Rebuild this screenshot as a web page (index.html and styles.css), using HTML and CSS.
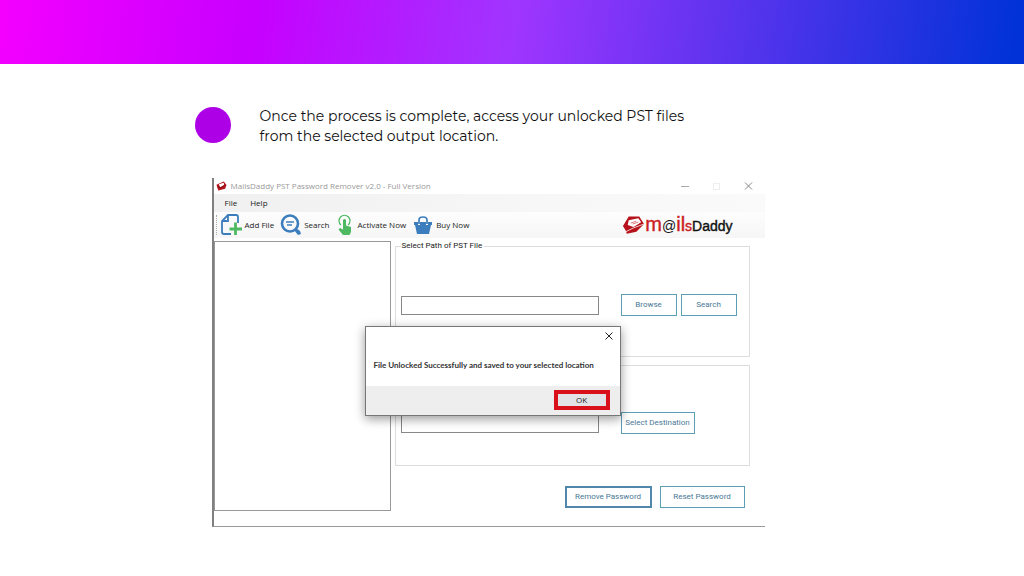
FILE: index.html
```html
<!doctype html>
<html lang="en">
<head>
  <meta charset="UTF-8">
  <meta name="viewport" content="width=device-width, initial-scale=1">
  <title>MailsDaddy PST Password Remover</title>
  <link rel="stylesheet" href="styles.css">
</head>
<body>
<header class="banner"></header>

<main class="slide">
  <div class="step">
    <span class="dot"></span>
    <p class="step-text">Once the process is complete, access your unlocked PST files from the selected output location.</p>
  </div>

  <div class="window">
    <div class="titlebar">
      <svg class="app-icon" viewBox="0 0 24 22">
        <path d="M1 8L17 1L23 9L20 17L5 21L3 15Z" fill="#b5121b"/>
        <path d="M6 7L17 4L18 9L9 14Z" fill="#fff"/>
        <path d="M3 13L11 15L20 8" fill="none" stroke="#7d0c12" stroke-width="2"/>
      </svg>
      <span class="title">MailsDaddy PST Password Remover v2.0 - Full Version</span>
      <svg class="win-btns" viewBox="0 0 74 10">
        <path d="M1 5.500H9" stroke="#aaa"/>
        <rect x="33.500" y="2.500" width="6" height="6" fill="none" stroke="#eee"/>
        <path d="M65 1.500L72 8.500M72 1.500L65 8.500" stroke="#888"/>
      </svg>
    </div>

    <nav class="menubar">
      <a href="#">File</a>
      <a href="#">Help</a>
    </nav>

    <div class="toolbar">
      <button class="tool">
        <svg class="icon" viewBox="0 0 22 22">
          <path d="M17 9V3Q17 1 15 1H7L1 7V18Q1 20 3 20H10M7 1V7H1" fill="none" stroke="#3b7dbd" stroke-width="1.800"/>
          <path d="M14.500 8.500V21M8.500 15H21" stroke="#4fb962" stroke-width="2.800"/>
        </svg>
        Add File
      </button>
      <button class="tool">
        <svg class="icon" viewBox="0 0 22 22">
          <circle cx="10" cy="9.500" r="8" fill="none" stroke="#3b7dbd" stroke-width="2.600"/>
          <path d="M6 8H14M7 11H12" stroke="#3b7dbd" stroke-width="1.400"/>
          <path d="M14 16L18 21L21 20L20 17L16 14Z" fill="#3b7dbd"/>
        </svg>
        Search
      </button>
      <button class="tool tool-hand">
        <svg class="icon icon-hand" viewBox="0 0 16 22">
          <path d="M4 11A5.500 5.500 0 1 1 11 11" fill="none" stroke="#4fb962" stroke-width="1.200"/>
          <path d="M6 6Q7.500 4 9 6V11.500L14 13V18L12.500 21H6L1.500 15.500L3 14L6 15.500Z" fill="#4fb962"/>
        </svg>
        Activate Now
      </button>
      <button class="tool tool-buy">
        <svg class="icon icon-buy" viewBox="0 0 18 20">
          <path d="M5 9V5Q5 2 9 2T13 5V9" fill="none" stroke="#3b7dbd" stroke-width="1.700"/>
          <path d="M0 7H4V10H6V7H12V10H14V7H18V10H17L15 19H3L1 10H0Z" fill="#3b7dbd"/>
        </svg>
        Buy Now
      </button>
      <div class="brand">
        <svg class="brand-icon" viewBox="0 0 24 20">
          <path d="M7 1L18 1L23 9L15 17L5 19L4 16L1 11Z" fill="#b5121b"/>
          <path d="M7 5L17 3L20 7L12 12L6 10Z" fill="#fff"/>
          <path d="M9 8L15 6M11 9L17 7" stroke="#d8787c"/>
          <path d="M4 17L12 13L23 9" fill="none" stroke="#f3d5d6"/>
        </svg>
        <span class="brand-name"><span class="brand-m">m</span><span class="brand-at">@</span><span class="brand-il">il</span><span class="brand-s">s</span>Daddy</span>
      </div>
    </div>

    <div class="content">
      <div class="tree"></div>
      <div class="forms">
        <fieldset class="group">
          <legend>Select Path of PST File</legend>
          <div class="field-row">
            <input class="path" type="text" aria-label="PST file path">
            <button class="btn">Browse</button>
            <button class="btn">Search</button>
          </div>
        </fieldset>
        <fieldset class="group group-dest">
          <div class="field-row">
            <input class="path" type="text" aria-label="Destination path">
            <button class="btn btn-dest">Select Destination</button>
          </div>
        </fieldset>
        <div class="actions">
          <button class="btn btn-action btn-main">Remove Password</button>
          <button class="btn btn-action">Reset Password</button>
        </div>
      </div>
    </div>

    <div class="dialog" role="dialog" aria-labelledby="msg">
      <button class="dialog-close" aria-label="Close">
        <svg viewBox="0 0 8 8"><path d="M0.500 0.500L7.500 7.500M7.500 0.500L0.500 7.500" stroke="#222"/></svg>
      </button>
      <p class="dialog-msg" id="msg">File Unlocked Successfully and saved to your selected location</p>
      <div class="dialog-footer">
        <button class="ok">OK</button>
      </div>
    </div>
  </div>
</main>
</body>
</html>
```
FILE: styles.css
```css
* {
  box-sizing: border-box;
}
body {
  margin: 0;
  background: #fff;
  font-family: "Open Sans", "Noto Sans", sans-serif;
}
button, input {
  font: inherit;
  margin: 0;
}
button {
  padding: 0;
  border: 0;
  background: none;
  color: inherit;
}
.banner {
  height: 64px;
  background: linear-gradient(97deg, #f400ff 0%, #c700ff 25%, #a035ff 50%, #0032d8 99%);
}

/* step */
.slide {
  padding: 42px 24px 48px 19%;
}
.step {
  display: flex;
  gap: 29px;
}
.dot {
  flex: none;
  width: 36px;
  height: 36px;
  margin-top: 1px;
  border-radius: 50%;
  background: #ad00e6;
}
.step-text {
  max-width: 450px;
  margin: 0;
  font-family: Montserrat, "Open Sans", sans-serif;
  font-size: 14px;
  line-height: 20px;
  color: #111;
}

/* app window */
.window {
  position: relative;
  max-width: 553px;
  margin: 32px 0 0 17px;
  border-left: 2px solid #808080;
  border-bottom: 1px solid #999;
  font-size: 8px;
  line-height: 10px;
  color: #222;
}
.titlebar {
  display: flex;
  align-items: center;
  gap: 4px;
  height: 16px;
  padding: 0 11px 0 2px;
}
.app-icon {
  width: 11px;
  height: 10px;
}
.title {
  flex: 1;
  color: #999;
}
.win-btns {
  width: 74px;
  height: 10px;
}
.menubar {
  display: flex;
  align-items: center;
  gap: 13px;
  height: 18px;
  padding-left: 11px;
  background: linear-gradient(90deg, #f0f0f0, #f7f7f7 60%, #fafafa);
}
.menubar a {
  color: #222;
  text-decoration: none;
}
.toolbar {
  display: flex;
  align-items: center;
  gap: 6px;
  height: 26px;
  padding: 0 32px 0 2px;
  background: linear-gradient(#fdfdfd, #f6f6f6);
}
.toolbar::before {
  content: "";
  height: 20px;
  margin-right: -2px;
  border-left: 1px dotted #aaa;
}
.tool {
  display: flex;
  align-items: center;
  gap: 2px;
}
.tool-hand {
  gap: 4px;
  margin-left: 2px;
}
.tool-buy {
  gap: 4px;
  margin-left: 2px;
}
.icon {
  width: 22px;
  height: 22px;
}
.icon-hand {
  width: 16px;
}
.icon-buy {
  width: 18px;
  height: 20px;
}
.brand {
  display: flex;
  align-items: center;
  margin-left: auto;
}
.brand-icon {
  width: 23px;
  height: 20px;
}
.brand-name {
  font-family: "Liberation Sans", Arial, sans-serif;
  font-size: 14px;
  line-height: 20px;
  color: #111;
  -webkit-text-stroke: 0.400px;
}
.brand-m, .brand-il {
  font-size: 20px;
  color: #cc1d24;
}
.brand-at {
  -webkit-text-stroke: 0;
}
.brand-s {
  color: #cc1d24;
}

.content {
  display: flex;
  gap: 4px;
  padding: 3px 15px 15px 0;
}
.tree {
  width: 177px;
  border: 1px solid #999;
}
.forms {
  flex: 1;
  padding-bottom: 3px;
  font-family: Roboto, "Liberation Sans", sans-serif;
}
.group {
  min-width: 0;
  height: 116px;
  margin: 0;
  padding: 43px 12px 0 5px;
  border: 1px solid #ddd;
}
.group legend {
  padding: 0 2px 0 1px;
  color: #222;
}
.group-dest {
  height: 101px;
  margin-top: 8px;
  padding-top: 46px;
}
.field-row {
  display: flex;
  align-items: center;
  gap: 4px;
}
.path {
  width: 198px;
  height: 19px;
  margin-right: 18px;
  border: 1px solid #888;
  background: #fff;
}
.btn {
  width: 56px;
  height: 22px;
  border: 1px solid #5e9eb5;
  background: #fff;
  color: #4a7896;
}
.btn-dest {
  width: 74px;
}
.actions {
  display: flex;
  justify-content: flex-end;
  gap: 8px;
  padding: 20px 5px 0 0;
}
.btn-action {
  width: 85px;
}
.btn-main {
  width: 87px;
  border: 2px solid #4f88ab;
}

/* message box over the window */
.dialog {
  position: absolute;
  top: 148px;
  left: 151px;
  width: 256px;
  border: 1px solid #777;
  background: #fff;
  box-shadow: 0 3px 10px rgba(0, 0, 0, 0.400);
}
.dialog-close {
  display: block;
  width: 8px;
  height: 8px;
  margin: 5px 7px 0 auto;
}
.dialog-close svg {
  display: block;
}
.dialog-msg {
  margin: 20px 8px 16px;
  font-family: Lato, "Open Sans", sans-serif;
  font-weight: 700;
  color: #333;
}
.dialog-footer {
  display: flex;
  justify-content: flex-end;
  padding: 4px 10px 5px;
  background: #eee;
}
.ok {
  width: 56px;
  height: 20px;
  border: 4px solid #d9101a;
  background: #e3e3e6;
}
```
